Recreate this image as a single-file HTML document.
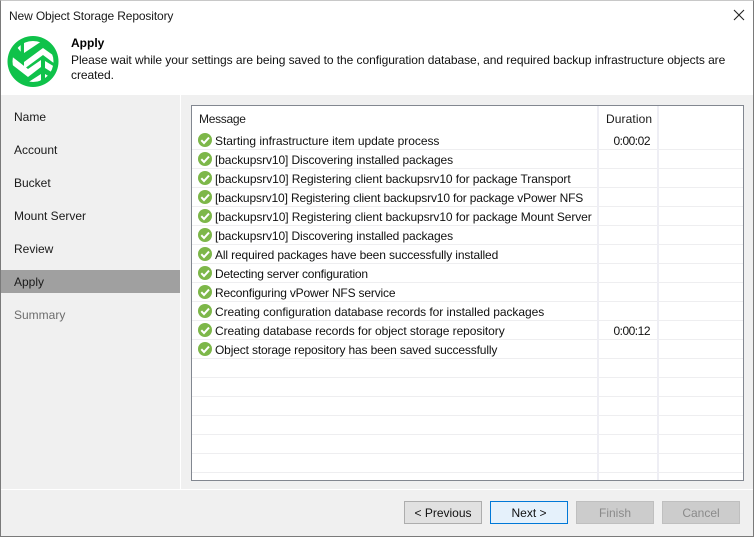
<!DOCTYPE html>
<html><head><meta charset="utf-8">
<style>
*{box-sizing:border-box}
html,body{margin:0;padding:0;background:#fff}
body{width:754px;height:537px;position:relative;overflow:hidden;font-family:"Liberation Sans",sans-serif;font-size:12px;color:#1a1a1a}
.a{position:absolute;white-space:nowrap}
.nav{position:absolute;left:14px;white-space:nowrap;line-height:16px}
.row{position:absolute;left:215px;white-space:nowrap;line-height:16px;color:#111;letter-spacing:-.09px}
.line{position:absolute;left:192px;width:551px;height:1px;background:#eeeef0}
.dur{position:absolute;left:598px;width:52px;text-align:right;line-height:16px;color:#111;letter-spacing:-.5px}
.btn{position:absolute;top:501px;width:78px;height:23px;border:1px solid #adadad;background:#e1e1e1;text-align:center;line-height:22px;color:#111}
.dis{background:#cccccc;border-color:#bfbfbf;color:#8a8a8a}
</style></head><body>
<div class="a" style="left:0;top:95px;width:754px;height:442px;background:#f0f0f0"></div>
<div class="a" style="left:180px;top:95px;width:1px;height:394px;background:#fff"></div>
<div class="a" style="left:0;top:489px;width:754px;height:1px;background:#fff"></div>
<div class="a" style="left:9px;top:8px;line-height:16px;letter-spacing:-.13px">New Object Storage Repository</div>
<svg class="a" style="left:733px;top:9px" width="12" height="12" viewBox="0 0 12 12"><path d="M1 1L11 11M11 1L1 11" stroke="#222" stroke-width="1.1" fill="none"/></svg>
<svg class="a" style="left:7px;top:36px" width="52" height="51" viewBox="0 0 52 51">
<defs><clipPath id="c"><circle cx="26" cy="25.5" r="20.5"/></clipPath></defs>
<circle cx="26" cy="25.5" r="25.5" fill="#0fc24a"/>
<g clip-path="url(#c)" fill="#fff">
<polygon points="9.7,10.7 13.7,7.3 13.7,15.7"/>
<polygon points="17,6 29,0 35,5 17,17"/>
<polygon points="17,26 36,12 50,22 48,28 36,19 17,33"/>
<polygon points="3,19 21,33 34,24 34,31 21,41 3,27"/>
<polygon points="20,47 34,38 34,44 27,50"/>
<polygon points="38,25 48,31 46,37 38,32"/>
<polygon points="38,38 43,41 38,45"/>
</g></svg>
<div class="a" style="left:71px;top:35px;line-height:16px;font-weight:bold;color:#000">Apply</div>
<div class="a" style="left:71px;top:52px;line-height:16px;letter-spacing:-.06px;color:#111">Please wait while your settings are being saved to the configuration database, and required backup infrastructure objects are</div>
<div class="a" style="left:71px;top:67px;line-height:16px;letter-spacing:-.06px;color:#111">created.</div>

<div class="nav" style="top:109px">Name</div>
<div class="nav" style="top:142px">Account</div>
<div class="nav" style="top:175px">Bucket</div>
<div class="nav" style="top:208px">Mount Server</div>
<div class="nav" style="top:241px">Review</div>
<div class="a" style="left:1px;top:270px;width:179px;height:23px;background:#a0a0a0"></div>
<div class="nav" style="top:274px">Apply</div>
<div class="nav" style="top:307px;color:#6d6d6d">Summary</div>

<div class="a" style="left:191px;top:105px;width:553px;height:376px;background:#fff;border:1px solid #828790"></div>
<div class="a" style="left:199px;top:111px;line-height:16px;letter-spacing:-.3px">Message</div>
<div class="a" style="left:606px;top:111px;line-height:16px;letter-spacing:.1px">Duration</div>

<div class="line" style="top:149px"></div><div class="line" style="top:168px"></div><div class="line" style="top:187px"></div><div class="line" style="top:206px"></div><div class="line" style="top:225px"></div><div class="line" style="top:244px"></div><div class="line" style="top:263px"></div><div class="line" style="top:282px"></div><div class="line" style="top:301px"></div><div class="line" style="top:320px"></div><div class="line" style="top:339px"></div><div class="line" style="top:358px"></div><div class="line" style="top:377px"></div><div class="line" style="top:396px"></div><div class="line" style="top:415px"></div><div class="line" style="top:434px"></div><div class="line" style="top:453px"></div><div class="line" style="top:472px"></div>
<div class="a" style="left:597px;top:106px;width:2px;height:374px;background:#eeeef4"></div>
<div class="a" style="left:657px;top:106px;width:2px;height:374px;background:#eeeef4"></div>

<svg class="a" style="left:0;top:0" width="754" height="537">
<defs><g id="k"><circle cx="205" cy="0" r="7" fill="#7db749"/><path d="M201.3 0.2L204 3L209 -2.4" stroke="#fff" stroke-width="2" fill="none"/></g></defs>
<use href="#k" y="140"/><use href="#k" y="159"/><use href="#k" y="178"/><use href="#k" y="197"/><use href="#k" y="216"/><use href="#k" y="235"/><use href="#k" y="254"/><use href="#k" y="273"/><use href="#k" y="292"/><use href="#k" y="311"/><use href="#k" y="330"/><use href="#k" y="349"/>
</svg>

<div class="row" style="top:133px;letter-spacing:-.04px">Starting infrastructure item update process</div>
<div class="row" style="top:152px;letter-spacing:-.11px">[backupsrv10] Discovering installed packages</div>
<div class="row" style="top:171px">[backupsrv10] Registering client backupsrv10 for package Transport</div>
<div class="row" style="top:190px;letter-spacing:-.15px">[backupsrv10] Registering client backupsrv10 for package vPower NFS</div>
<div class="row" style="top:209px">[backupsrv10] Registering client backupsrv10 for package Mount Server</div>
<div class="row" style="top:228px;letter-spacing:-.11px">[backupsrv10] Discovering installed packages</div>
<div class="row" style="top:247px;letter-spacing:-.13px">All required packages have been successfully installed</div>
<div class="row" style="top:266px;letter-spacing:-.22px">Detecting server configuration</div>
<div class="row" style="top:285px;letter-spacing:-.18px">Reconfiguring vPower NFS service</div>
<div class="row" style="top:304px;letter-spacing:-.06px">Creating configuration database records for installed packages</div>
<div class="row" style="top:323px;letter-spacing:-.07px">Creating database records for object storage repository</div>
<div class="row" style="top:342px;letter-spacing:-.15px">Object storage repository has been saved successfully</div>
<div class="dur" style="top:133px">0:00:02</div>
<div class="dur" style="top:323px">0:00:12</div>

<div class="btn" style="left:404px">&lt; Previous</div>
<div class="btn" style="left:490px;background:#e5f1fb;border-color:#0078d7">Next &gt;</div>
<div class="btn dis" style="left:576px">Finish</div>
<div class="btn dis" style="left:662px">Cancel</div>

<div class="a" style="left:0;top:0;width:754px;height:537px;border:1px solid #7a7a7a;border-top-color:#c8c8c8"></div>
</body></html>
